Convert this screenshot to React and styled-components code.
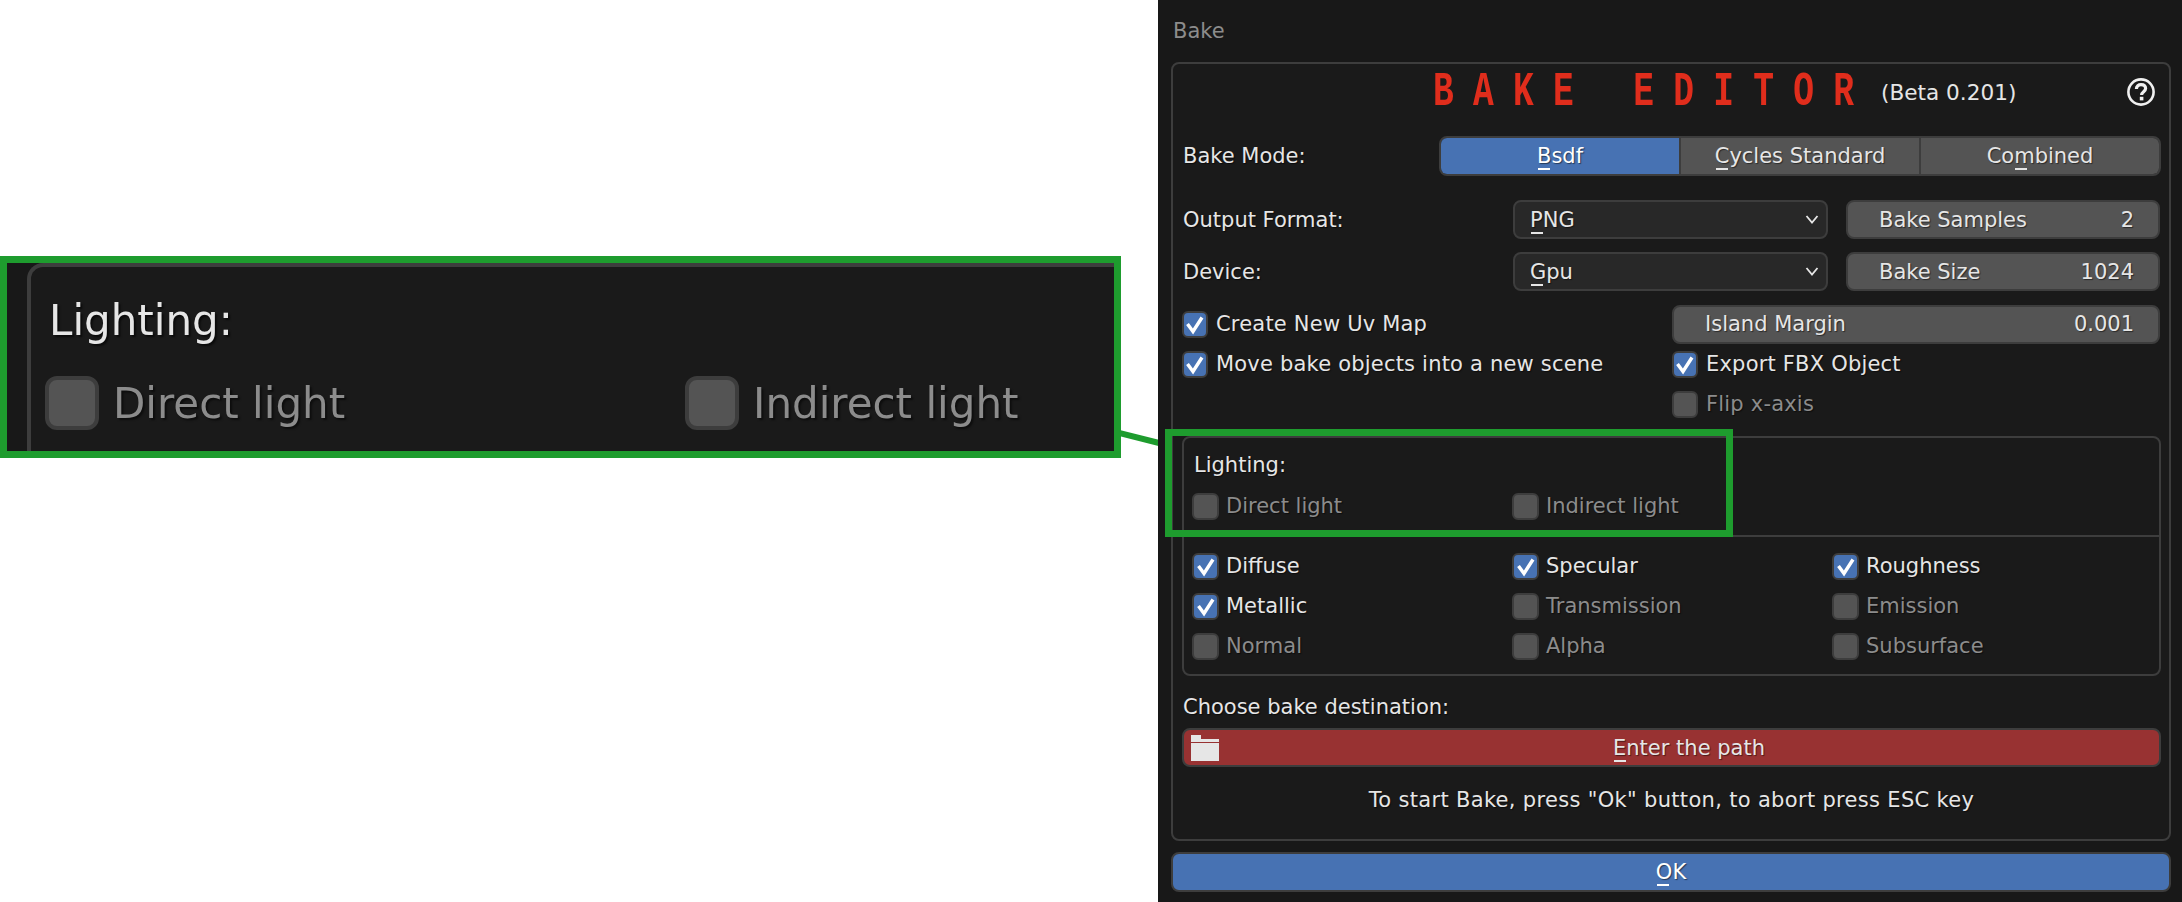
import React from 'react';
import styled, { createGlobalStyle } from 'styled-components';

const GREEN = '#1e9c2e';

const GlobalStyle = createGlobalStyle`
  html, body {
    margin: 0;
    padding: 0;
    background: #fff;
    overflow: hidden;
  }
  body {
    font-family: "DejaVu Sans", "Liberation Sans", sans-serif;
    font-size: 21px;
    color: #e6e6e6;
  }
`;

const Page = styled.div`
  position: relative;
  display: flex;
  width: 2182px;
  height: 902px;
`;

const LeftArea = styled.div`
  width: 1158px;
  flex: none;
  padding-top: 256px;
  box-sizing: border-box;
`;

const Inset = styled.div`
  width: 1121px;
  height: 202px;
  box-sizing: border-box;
  border: 7px solid ${GREEN};
  background: #181818;
  overflow: hidden;
`;

const InsetZoom = styled.div`
  zoom: 2;
  width: 554px;
  height: 94px;
  padding-left: 10px;
  box-sizing: border-box;
  filter: blur(0.3px);
`;

const Connector = styled.svg`
  position: absolute;
  left: 1119px;
  top: 428px;
`;

const Highlight = styled.div`
  position: absolute;
  left: 7px;
  top: 429px;
  width: 568px;
  height: 108px;
  box-sizing: border-box;
  border: 7px solid ${GREEN};
  pointer-events: none;
`;

const Dialog = styled.div`
  position: relative;
  flex: 1;
  height: 902px;
  box-sizing: border-box;
  background: #181818;
  padding: 0 13px 0 13px;
  display: flex;
  flex-direction: column;
`;

const DialogTitle = styled.div`
  height: 62px;
  line-height: 62px;
  color: #8c8c8c;
  padding-left: 2px;
  flex: none;
`;

const Panel = styled.div`
  height: 779px;
  box-sizing: border-box;
  flex: none;
  background: #1a1a1a;
  border: 2px solid #3d3d3d;
  border-radius: 8px;
  padding: 0 8px 0 9px;
`;

const TitleRow = styled.div`
  height: 56px;
  display: flex;
  align-items: center;
  position: relative;
  padding-left: 251px;
`;

const BigTitle = styled.div`
  width: 448px;
  flex: none;
  font-family: "Liberation Mono", monospace;
  font-weight: 700;
  font-size: 48px;
  color: #e02d1c;
  letter-spacing: 26.8px;
  transform: scaleX(0.72);
  transform-origin: left center;
  white-space: pre;
`;

const Version = styled.span`
  font-size: 21.6px;
  white-space: nowrap;
`;

const HelpIcon = styled.svg`
  margin-left: auto;
  margin-right: 6px;
`;

const ModeRow = styled.div`
  margin-top: 16px;
  display: grid;
  grid-template-columns: 257px 1fr;
  align-items: center;
`;

const FieldRow = styled.div`
  margin-top: ${(p) => p.$top}px;
  display: grid;
  grid-template-columns: 331px 315px 314px;
  column-gap: 0;
  align-items: center;
  & > :last-child {
    margin-left: 18px;
    width: 314px;
  }
`;

const Label = styled.div`
  padding-left: 1px;
  text-shadow: 1px 1px 1px rgba(0, 0, 0, 0.6);
  white-space: nowrap;
`;

const Segments = styled.div`
  display: flex;
  height: 40px;
  box-sizing: border-box;
  border: 2px solid #3d3d3d;
  border-radius: 8px;
  overflow: hidden;
`;

const Segment = styled.div`
  flex: 1;
  display: flex;
  align-items: center;
  justify-content: center;
  background: ${(p) => (p.$active ? '#4772b3' : '#545454')};
  color: ${(p) => (p.$active ? '#fff' : '#e6e6e6')};
  text-shadow: 1px 1px 1px rgba(0, 0, 0, 0.5);
  & + & {
    border-left: 2px solid #3d3d3d;
  }
`;

const Mnemonic = styled.span`
  position: relative;
  &::after {
    content: '';
    position: absolute;
    left: 1px;
    width: 12px;
    height: 2px;
    top: 24px;
    background: currentColor;
  }
`;

const Select = styled.div`
  height: 39px;
  box-sizing: border-box;
  background: #282828;
  border: 2px solid #3d3d3d;
  border-radius: 8px;
  padding: 0 7px 0 15px;
  display: flex;
  align-items: center;
  justify-content: space-between;
  text-shadow: 1px 1px 1px rgba(0, 0, 0, 0.5);
`;

const Spin = styled.div`
  height: 39px;
  box-sizing: border-box;
  background: #545454;
  border: 2px solid #3d3d3d;
  border-radius: 8px;
  padding: 0 24px 0 31px;
  display: flex;
  align-items: center;
  justify-content: space-between;
  text-shadow: 1px 1px 1px rgba(0, 0, 0, 0.5);
`;

const CheckRow = styled.div`
  display: flex;
  align-items: center;
  gap: ${(p) => (p.$wide ? 7 : 8)}px;
  color: ${(p) => (p.$on ? '#e6e6e6' : '#8c8c8c')};
  text-shadow: 1px 1px 1px rgba(0, 0, 0, 0.5);
  white-space: nowrap;
`;

const Options = styled.div`
  margin-top: 13px;
  display: grid;
  grid-template-columns: 490px 488px;
  grid-auto-rows: 40px;
  align-items: center;
  & > ${CheckRow} {
    letter-spacing: 0.2px;
  }
`;

const CheckBox = styled.span`
  width: ${(p) => (p.$wide ? 27 : 26)}px;
  height: 27px;
  flex: none;
  box-sizing: border-box;
  border-radius: 6px;
  border: 2px solid #3d3d3d;
  background: ${(p) => (p.$on ? '#4772b3' : '#545454')};
  display: flex;
  align-items: center;
  justify-content: center;
`;

const GroupBox = styled.div`
  margin-top: 12px;
  height: 240px;
  box-sizing: border-box;
  border: 2px solid #3d3d3d;
  border-radius: 8px;
`;

const LightingFrame = styled.div`
  height: 99px;
  box-sizing: border-box;
  padding: 0 7px 0 8px;
  border-bottom: 2px solid #3d3d3d;
`;

const InsetFrame = styled.div`
  height: 120px;
  box-sizing: border-box;
  padding: 0 7px;
  background: #1a1a1a;
  border-top: 2px solid #3d3d3d;
  border-left: 2px solid #3d3d3d;
  border-top-left-radius: 8px;
`;

const LightingTitle = styled.div`
  height: 54px;
  line-height: 54px;
  padding-left: 2px;
  text-shadow: 1px 1px 1px rgba(0, 0, 0, 0.6);
`;

const MapGrid = styled.div`
  display: grid;
  grid-template-columns: 320px 320px 320px;
  grid-auto-rows: 40px;
  align-items: center;
  margin-top: -6px;
`;

const GroupGrid = styled(MapGrid)`
  margin-top: 0;
  padding: 9px 7px 0 8px;
`;

const ChooseLabel = styled(Label)`
  margin-top: 17px;
  height: 28px;
  line-height: 28px;
`;

const PathButton = styled.div`
  margin-top: 7px;
  height: 39px;
  box-sizing: border-box;
  background: #983232;
  border: 2px solid #3d3d3d;
  border-radius: 8px;
  display: flex;
  align-items: center;
  padding-left: 7px;
  text-shadow: 1px 1px 1px rgba(0, 0, 0, 0.5);
`;

const PathLabel = styled.div`
  flex: 1;
  text-align: center;
`;

const Hint = styled.div`
  margin-top: 18px;
  text-align: center;
  height: 30px;
  line-height: 30px;
  letter-spacing: 0.32px;
  text-shadow: 1px 1px 1px rgba(0, 0, 0, 0.5);
`;

const OkButton = styled.div`
  margin-top: 11px;
  height: 40px;
  flex: none;
  box-sizing: border-box;
  background: #4772b3;
  border: 2px solid #3d3d3d;
  border-radius: 8px;
  display: flex;
  align-items: center;
  justify-content: center;
  color: #fff;
  text-shadow: 1px 1px 1px rgba(0, 0, 0, 0.5);
`;

const Check = ({ on, wide, children }) => (
  <CheckRow $on={on} $wide={wide}>
    <CheckBox $on={on} $wide={wide}>
      {on && (
        <svg width="22" height="23" viewBox="0 0 22 23">
          <path d="M3.5 11 L9 18.5 L18 4.5" fill="none" stroke="#fff" strokeWidth="3.4" />
        </svg>
      )}
    </CheckBox>
    {children}
  </CheckRow>
);

const Chevron = () => (
  <svg width="14" height="9" viewBox="0 0 14 9">
    <path d="M1.5 1 L7 7.5 L12.5 1" fill="none" stroke="#e6e6e6" strokeWidth="1.8" />
  </svg>
);

const Folder = () => (
  <svg width="28" height="26" viewBox="0 0 28 26">
    <path d="M0 0 H10 V4 H28 V7 H0 Z M0 8 H28 V26 H0 Z" fill="#e6e6e6" />
  </svg>
);

const Help = () => (
  <HelpIcon width="28" height="28" viewBox="0 0 28 28">
    <circle cx="14" cy="14" r="12.6" fill="none" stroke="#f0f0f0" strokeWidth="2.6" />
    <path
      d="M9.4 11 C9.4 8 11.6 6.6 14 6.6 C16.8 6.6 18.6 8.2 18.6 10.6 C18.6 13.6 14.6 13.8 14.6 17"
      fill="none"
      stroke="#f0f0f0"
      strokeWidth="3.2"
    />
    <rect x="12.8" y="18.8" width="3.6" height="3.6" fill="#f0f0f0" />
  </HelpIcon>
);

const LightingContent = () => (
  <>
    <LightingTitle>Lighting:</LightingTitle>
    <MapGrid>
      <Check wide>Direct light</Check>
      <Check wide>Indirect light</Check>
    </MapGrid>
  </>
);

const App = () => (
  <Page>
    <GlobalStyle />
    <LeftArea>
      <Inset>
        <InsetZoom>
          <InsetFrame>
            <LightingContent />
          </InsetFrame>
        </InsetZoom>
      </Inset>
    </LeftArea>
    <Connector width="50" height="22" viewBox="0 0 50 22">
      <line x1="0" y1="5" x2="48" y2="17" stroke={GREEN} strokeWidth="6" />
    </Connector>
    <Dialog>
      <DialogTitle>Bake</DialogTitle>
      <Panel>
        <TitleRow>
          <BigTitle>BAKE EDITOR</BigTitle>
          <Version>(Beta 0.201)</Version>
          <Help />
        </TitleRow>
        <ModeRow>
          <Label>Bake Mode:</Label>
          <Segments>
            <Segment $active><span><Mnemonic>B</Mnemonic>sdf</span></Segment>
            <Segment><span><Mnemonic>C</Mnemonic>ycles Standard</span></Segment>
            <Segment><span>Co<Mnemonic>m</Mnemonic>bined</span></Segment>
          </Segments>
        </ModeRow>
        <FieldRow $top={24}>
          <Label>Output Format:</Label>
          <Select><span><Mnemonic>P</Mnemonic>NG</span><Chevron /></Select>
          <Spin><span>Bake Samples</span><span>2</span></Spin>
        </FieldRow>
        <FieldRow $top={13}>
          <Label>Device:</Label>
          <Select><span><Mnemonic>G</Mnemonic>pu</span><Chevron /></Select>
          <Spin><span>Bake Size</span><span>1024</span></Spin>
        </FieldRow>
        <Options>
          <Check on>Create New Uv Map</Check>
          <Spin><span>Island Margin</span><span>0.001</span></Spin>
          <Check on>Move bake objects into a new scene</Check>
          <Check on>Export FBX Object</Check>
          <span />
          <Check>Flip x-axis</Check>
        </Options>
        <GroupBox>
          <LightingFrame>
            <LightingContent />
          </LightingFrame>
          <GroupGrid>
            <Check on wide>Diffuse</Check>
            <Check on wide>Specular</Check>
            <Check on wide>Roughness</Check>
            <Check on wide>Metallic</Check>
            <Check wide>Transmission</Check>
            <Check wide>Emission</Check>
            <Check wide>Normal</Check>
            <Check wide>Alpha</Check>
            <Check wide>Subsurface</Check>
          </GroupGrid>
        </GroupBox>
        <ChooseLabel>Choose bake destination:</ChooseLabel>
        <PathButton>
          <Folder />
          <PathLabel><Mnemonic>E</Mnemonic>nter the path</PathLabel>
        </PathButton>
        <Hint>To start Bake, press "Ok" button, to abort press ESC key</Hint>
      </Panel>
      <OkButton><span><Mnemonic>O</Mnemonic>K</span></OkButton>
      <Highlight />
    </Dialog>
  </Page>
);

export default App;
